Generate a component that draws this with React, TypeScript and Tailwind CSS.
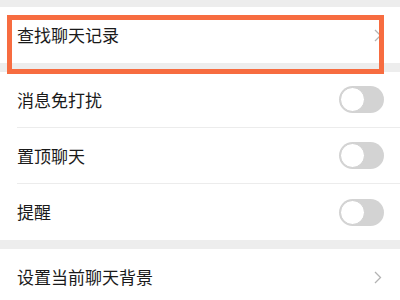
const FONT = { fontFamily: '"Noto Sans CJK SC", "Noto Sans", sans-serif' };

function Chevron() {
    return (
        <svg width="8" height="13" viewBox="0 0 8 13" fill="none" className="text-[#b3b3b3]">
            <path d="M1 1l5.5 5.5L1 12" stroke="currentColor" strokeWidth="1.3" />
        </svg>
    );
}

function Toggle() {
    return (
        <div className="w-[45px] h-[27px] rounded-full bg-[#d3d3d3] p-[1px] flex items-center">
            <div className="w-[25px] h-[25px] rounded-full bg-white border border-[#cfcfcf]" />
        </div>
    );
}

function LinkRow({ label }: { label: string }) {
    return (
        <div className="h-[56px] flex items-center justify-between pl-[17px] pr-[18px] bg-white">
            <span className="text-[17px] text-[#1a1a1a]">{label}</span>
            <Chevron />
        </div>
    );
}

function ToggleRow({ label, last }: { label: string; last?: boolean }) {
    return (
        <div className="pl-[17px] bg-white">
            <div className={`h-[56px] flex items-center justify-between pr-[16px] ${last ? '' : 'border-b border-[#ececec]'}`}>
                <span className="text-[17px] text-[#1a1a1a]">{label}</span>
                <Toggle />
            </div>
        </div>
    );
}

export default function App() {
    return (
        <div className="relative w-[400px] h-[300px] overflow-hidden bg-[#ededed]" style={FONT}>
            <div className="h-[7px]" />
            <LinkRow label="查找聊天记录" />
            <div className="h-[9px]" />
            <ToggleRow label="消息免打扰" />
            <ToggleRow label="置顶聊天" />
            <ToggleRow label="提醒" last />
            <div className="h-[9px]" />
            <LinkRow label="设置当前聊天背景" />

            {/* highlight box */}
            <div className="absolute left-[7px] top-[15px] w-[377px] h-[59px] border-[5px] border-[#f76c40]" />
        </div>
    );
}
